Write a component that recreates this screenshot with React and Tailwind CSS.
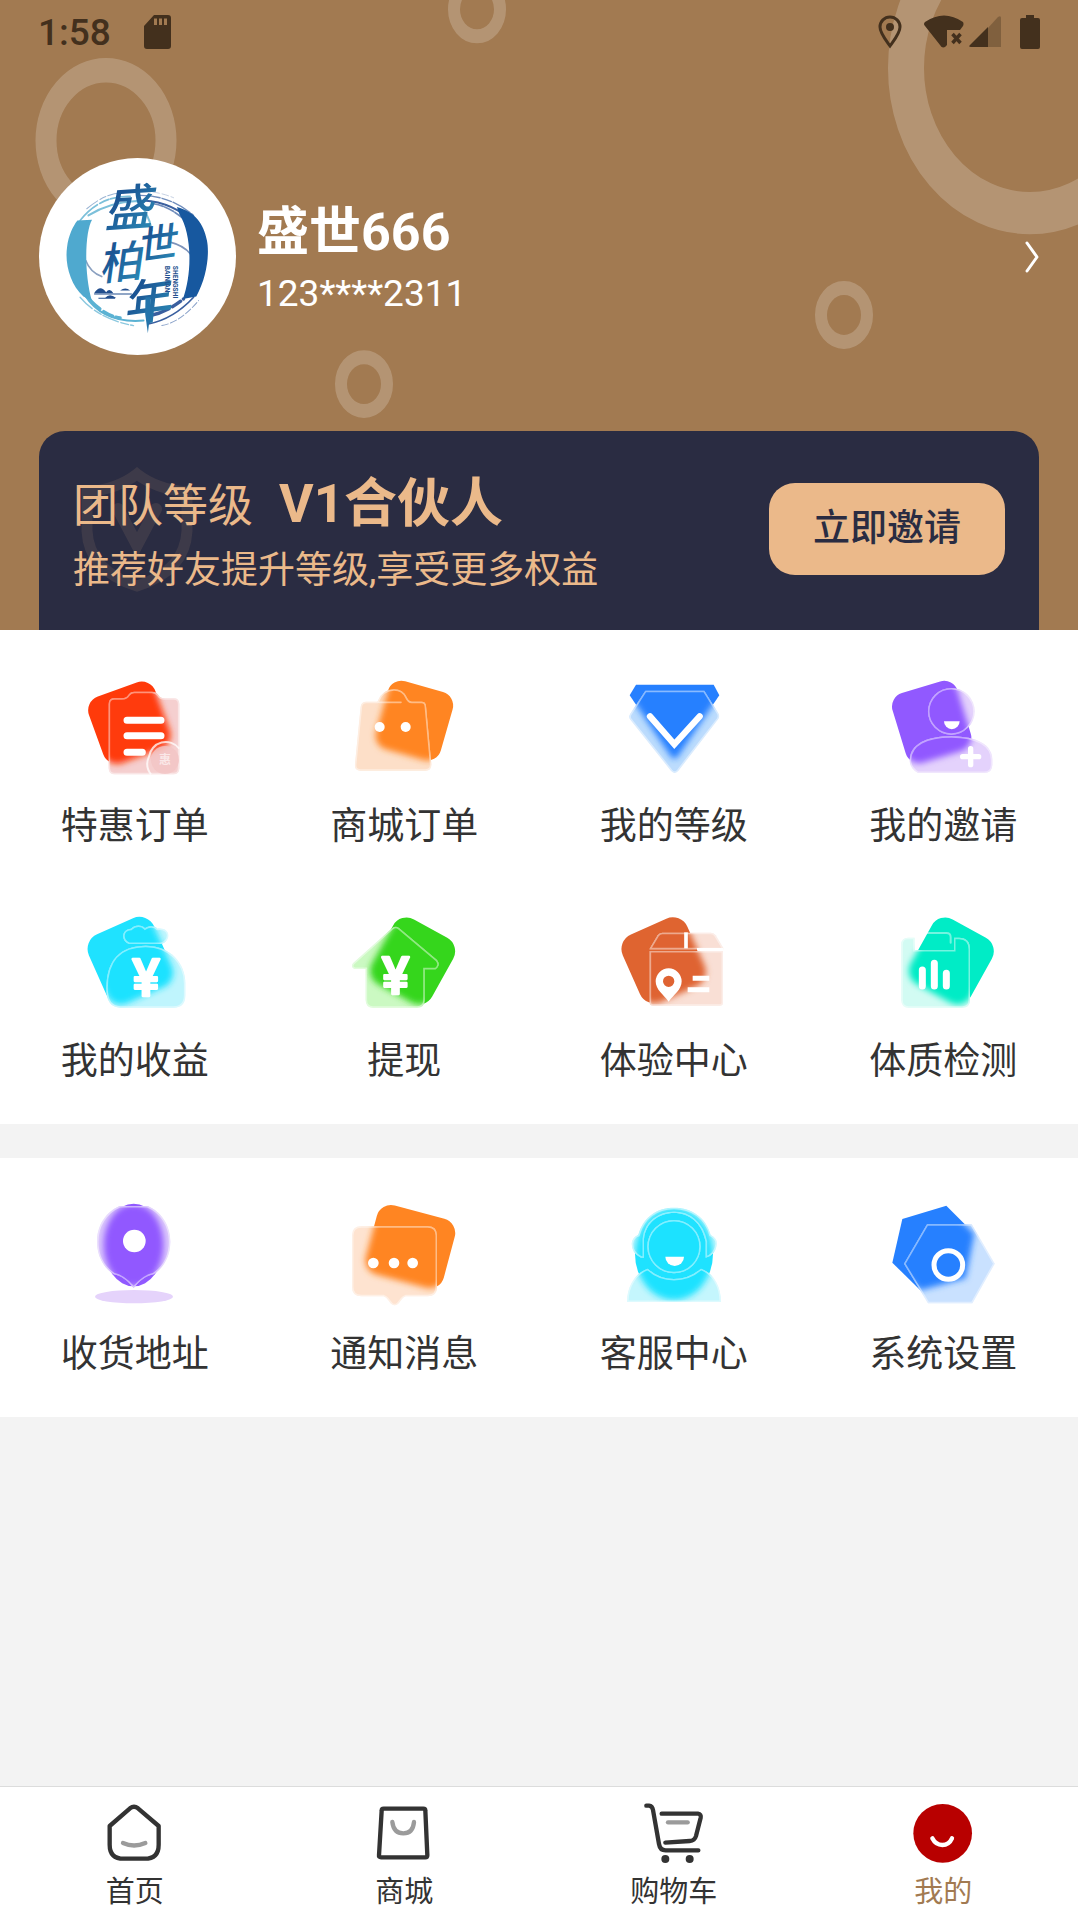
// Tinted glass card over a solid shape: the part under the glass is blurred.
function Frosted({ id, viewBox, color, tint, base, glass, lines, children }) {
    return (
        <svg viewBox={viewBox} className="w-[110px] h-[110px]" aria-hidden="true">
            <defs>
                <clipPath id={`${id}-clip`}>{glass}</clipPath>
                <filter id={`${id}-blur`} x="-20%" y="-20%" width="140%" height="140%">
                    <feGaussianBlur stdDeviation="10" />
                </filter>
            </defs>
            <g fill={color}>{base}</g>
            <g fill={tint}>{glass}</g>
            <g clipPath={`url(#${id}-clip)`}>
                <g fill={color} filter={`url(#${id}-blur)`}>
                    {base}
                </g>
                <g fill="none" stroke="#fff" strokeOpacity="0.45" strokeWidth="9">
                    {glass}
                </g>
            </g>
            {lines && (
                <g fill="none" stroke="#fff" strokeOpacity="0.45" strokeWidth="5" strokeLinecap="round">
                    {lines}
                </g>
            )}
            {children}
        </svg>
    );
}

function Tile({ cx, cy, w, h, r, angle }) {
    return (
        <rect
            x={cx - w / 2}
            y={cy - h / 2}
            width={w}
            height={h}
            rx={r}
            transform={`rotate(${angle} ${cx} ${cy})`}
        />
    );
}

function Yen({ x, y }) {
    return (
        <text
            x={x}
            y={y}
            textAnchor="middle"
            fontSize="156"
            fontWeight="500"
            fill="#fff"
            stroke="#fff"
            strokeWidth="7"
            strokeLinejoin="round"
        >
            ¥
        </text>
    );
}

const DealIcon = () => (
    <Frosted
        id="deal"
        viewBox="59 42 330 330"
        color="#ff3a0a"
        tint="#f5cfcf"
        base={<Tile cx={207} cy={188} w={212} h={212} r={44} angle={-20} />}
        glass={
            <path d="M145 132Q145 115 162 115H185Q198 115 204 105Q210 95 222 95H275Q288 95 294 105Q300 115 312 115H340Q357 115 357 132V325Q357 343 339 343H163Q145 343 145 325Z" />
        }
    >
        <path d="M200 181H302M200 227H302M200 277H246" stroke="#fff" strokeWidth="21" strokeLinecap="round" />
        <circle cx="314" cy="300" r="42" fill="#f3c4c4" fillOpacity="0.8" />
        <path d="M272 343A51 51 0 0 1 266 290A51 51 0 0 1 357 266" fill="none" stroke="#fff" strokeOpacity="0.75" strokeWidth="6" />
        <text x="314" y="312" textAnchor="middle" fontSize="36" fontWeight="700" fill="#fff" fillOpacity="0.6">
            惠
        </text>
    </Frosted>
);

const MallOrderIcon = () => (
    <Frosted
        id="mall-order"
        viewBox="868 42 330 330"
        color="#ff8522"
        tint="#fddfc8"
        base={<Tile cx={1064} cy={182} w={202} h={212} r={42} angle={16} />}
        glass={
            <path d="M920 125H953Q968 88 1003 88Q1030 88 1041 112Q1047 125 1056 125H1086Q1098 125 1099 138L1115 312Q1116 332 1098 332H902Q884 332 886 312L903 140Q905 125 920 125Z" />
        }
        lines={<path d="M958 127H1024" />}
    >
        <circle cx="960" cy="201" r="15" fill="#fff" />
        <circle cx="1038" cy="201" r="15" fill="#fff" />
    </Frosted>
);

const LevelIcon = () => (
    <Frosted
        id="level"
        viewBox="56 42 330 330"
        color="#2680ff"
        tint="#bcdcfd"
        base={<path d="M107 74H340L357 106L232 290Q222 302 212 290L88 106Z" />}
        glass={
            <path d="M135 92H312L353 158Q360 168 353 178L234 332Q223 344 212 332L91 180Q83 170 91 160Z" />
        }
    >
        <path d="M149 169L222 253L298 169" fill="none" stroke="#fff" strokeWidth="19" strokeLinecap="round" />
    </Frosted>
);

const InviteIcon = () => (
    <Frosted
        id="invite"
        viewBox="865 42 330 330"
        color="#9159ff"
        tint="#e4d2fc"
        base={<Tile cx={996} cy={186} w={204} h={218} r={42} angle={-17} />}
        glass={
            <>
                <circle cx="1055" cy="154" r="70" />
                <path d="M955 339Q930 325 930 300C932 252 980 229 1055 229C1132 229 1178 255 1178 300V314Q1178 339 1152 339Z" />
            </>
        }
    >
        <path d="M1033 184H1080A23.500 23.500 0 0 1 1033 184Z" fill="#fff" />
        <path d="M1113 266V314M1089 290H1137" stroke="#fff" strokeWidth="16" strokeLinecap="round" />
    </Frosted>
);

const IncomeIcon = () => (
    <Frosted
        id="income"
        viewBox="59 27 330 330"
        color="#1fe2ff"
        tint="#bff5fd"
        base={<Tile cx={210} cy={182} w={214} h={226} r={48} angle={-24} />}
        glass={
            <>
                <path d="M206 132C182 122 182 88 212 86C224 74 244 74 254 85C266 76 284 78 291 86C334 80 332 126 302 132Z" />
                <path d="M138 265C138 180 180 137 256 137C330 137 375 190 375 250V285Q375 323 340 323H180Q138 323 138 265Z" />
            </>
        }
    >
        <Yen x={257} y={287} />
    </Frosted>
);

const WithdrawIcon = () => (
    <Frosted
        id="withdraw"
        viewBox="868 27 330 330"
        color="#35d61c"
        tint="#cbf9c2"
        base={<Tile cx={1059} cy={183} w={206} h={222} r={46} angle={29} />}
        glass={
            <path d="M998 84Q1008 76 1018 84L1132 180Q1144 196 1128 208H1095V300Q1095 323 1072 323H940Q918 323 918 300V207H885Q872 202 880 190Z" />
        }
    >
        <Yen x={1008} y={283} />
    </Frosted>
);

const CenterIcon = () => (
    <Frosted
        id="center"
        viewBox="56 27 330 330"
        color="#df6430"
        tint="#f9dfd5"
        base={<Tile cx={190} cy={181} w={212} h={222} r={48} angle={-24} />}
        glass={
            <>
                <path d="M147 148L172 106Q177 98 186 98H332Q341 98 346 106L371 148Z" />
                <path d="M148 153H368V308Q368 317 358 317H158Q148 317 148 308Z" />
            </>
        }
    >
        <path d="M257 97V145" stroke="#fff" strokeWidth="11" />
        <path d="M290 148H370" stroke="#fff" strokeWidth="8" />
        <path
            fillRule="evenodd"
            d="M205 305C190 284 166 270 166 244A39 39 0 0 1 244 244C244 270 220 284 205 305ZM205 227A17 17 0 1 0 205 261A17 17 0 1 0 205 227Z"
            fill="#fff"
        />
        <path d="M277 235H327M262 269H327" stroke="#fff" strokeWidth="15" />
    </Frosted>
);

const CheckupIcon = () => (
    <Frosted
        id="checkup"
        viewBox="865 27 330 330"
        color="#00ecc6"
        tint="#d2fbf3"
        base={<Tile cx={1055} cy={183} w={206} h={222} r={46} angle={29} />}
        glass={
            <path d="M905 133Q905 113 925 113H945V150H1063V113H1078Q1111 113 1111 148V300Q1111 323 1088 323H927Q905 323 905 300Z" />
        }
        lines={<path d="M952 142V112Q952 99 965 99H1040Q1053 99 1053 112V128" strokeWidth="6" />}
    >
        <path d="M968 210V258M1004 190V258M1040 220V258" stroke="#fff" strokeWidth="21" strokeLinecap="round" />
    </Frosted>
);

const AddressIcon = () => (
    <Frosted
        id="address"
        viewBox="59 39 330 330"
        color="#9159ff"
        tint="#dcc9fc"
        base={<ellipse cx="220" cy="168" rx="90" ry="124" />}
        glass={
            <path d="M178 51H262C303 68 330 110 330 158C330 206 306 238 280 256C256 260 238 276 220 297C202 276 184 260 160 256C134 238 110 206 110 158C110 110 137 68 178 51Z" />
        }
    >
        <circle cx="222" cy="156" r="34" fill="#fff" />
        <ellipse cx="221" cy="323" rx="117" ry="20" fill="#e5d3fb" />
    </Frosted>
);

const MessageIcon = () => (
    <Frosted
        id="message"
        viewBox="868 39 330 330"
        color="#ff8522"
        tint="#fee3d0"
        base={<Tile cx={1052} cy={173} w={242} h={214} r={44} angle={15} />}
        glass={
            <path d="M905 112H1104Q1132 112 1132 140V294Q1132 322 1104 322H1038Q1030 324 1022 336Q1005 362 988 336Q980 324 972 322H905Q877 322 877 294V140Q877 112 905 112Z" />
        }
    >
        <circle cx="941" cy="222" r="16" fill="#fff" />
        <circle cx="1003" cy="222" r="16" fill="#fff" />
        <circle cx="1059" cy="222" r="16" fill="#fff" />
    </Frosted>
);

const ServiceIcon = () => (
    <Frosted
        id="service"
        viewBox="56 39 330 330"
        color="#1fe2ff"
        tint="#c4f6fd"
        base={<ellipse cx="221" cy="195" rx="117" ry="138" />}
        glass={
            <>
                <path d="M131 206H122Q94 192 94 164Q96 144 114 138C128 86 168 56 221 56C274 56 318 86 331 138Q350 148 350 164Q346 198 316 206V158C304 100 266 72 221 72C176 72 136 100 131 150Z" />
                <circle cx="221" cy="173" r="80" />
                <path d="M80 339C80 290 106 252 142 239Q176 270 221 270Q266 270 302 239C338 252 362 290 362 339Z" />
            </>
        }
    >
        <path d="M195 203H251A28 28 0 0 1 195 203Z" fill="#fff" />
    </Frosted>
);

const SettingIcon = () => (
    <Frosted
        id="setting"
        viewBox="865 39 330 330"
        color="#2680ff"
        tint="#c9e1ff"
        base={<path d="M1040 50L1124 134L1098 268L962 304L878 221L908 90Z" />}
        glass={<path d="M982 106H1116L1185 224L1118 343H985L913 224Z" />}
    >
        <circle cx="1046" cy="228" r="43" fill="none" stroke="#fff" strokeWidth="15" />
    </Frosted>
);

const orderMenu = [
    { label: "特惠订单", Icon: DealIcon },
    { label: "商城订单", Icon: MallOrderIcon },
    { label: "我的等级", Icon: LevelIcon },
    { label: "我的邀请", Icon: InviteIcon },
    { label: "我的收益", Icon: IncomeIcon },
    { label: "提现", Icon: WithdrawIcon },
    { label: "体验中心", Icon: CenterIcon },
    { label: "体质检测", Icon: CheckupIcon },
];

const serviceMenu = [
    { label: "收货地址", Icon: AddressIcon },
    { label: "通知消息", Icon: MessageIcon },
    { label: "客服中心", Icon: ServiceIcon },
    { label: "系统设置", Icon: SettingIcon },
];

function Menu({ items }) {
    return (
        <section className="grid grid-cols-4 gap-y-[55px] bg-white pt-11 pb-[35px]">
            {items.map(({ label, Icon }) => (
                <a key={label} href="#" className="flex flex-col items-center gap-4">
                    <Icon />
                    <span className="text-[37px] leading-[54px] text-[#333]">{label}</span>
                </a>
            ))}
        </section>
    );
}

const tabs = [
    {
        label: "首页",
        viewBox: "128 60 192 192",
        icon: (
            <>
                <path d="M148 138L209 85Q221 76 233 85L295 138V194Q295 236 253 236H190Q148 236 148 194Z" stroke="#333" />
                <path d="M188 189Q221 204 255 189" stroke="#9b9b9b" />
            </>
        ),
    },
    {
        label: "商城",
        viewBox: "937 60 192 192",
        icon: (
            <>
                <path d="M972 86H1091Q1097 86 1097 92L1103 226Q1103 232 1097 232H964Q957 232 958 226L966 92Q966 86 972 86Z" stroke="#333" />
                <path d="M998 126Q1002 160 1031 160Q1060 160 1063 126" stroke="#9b9b9b" />
            </>
        ),
    },
    {
        label: "购物车",
        viewBox: "125 60 192 192",
        icon: (
            <>
                <path d="M138 77H146Q156 78 158 90L176 192Q179 211 196 211H294M184 101H293Q303 102 301 113L287 168Q283 182 268 183L195 188" stroke="#333" />
                <path d="M203 127H262" stroke="#9b9b9b" />
                <circle cx="195" cy="237" r="12" fill="#333" />
                <circle cx="268" cy="237" r="12" fill="#333" />
            </>
        ),
    },
    {
        label: "我的",
        viewBox: "934 60 192 192",
        active: true,
        icon: (
            <>
                <circle cx="1029" cy="160" r="88" fill="#b80000" />
                <path d="M998 175Q1008 195 1028 195Q1048 195 1057 175" stroke="#fff" />
            </>
        ),
    },
];

function TabBar() {
    return (
        <nav className="grid grid-cols-4 border-t border-[#dcdcdc] bg-white pt-[13px] pb-2">
            {tabs.map((tab) => (
                <a
                    key={tab.label}
                    href="#"
                    aria-current={tab.active ? "page" : undefined}
                    className="flex flex-col items-center gap-[10px]"
                >
                    <svg
                        viewBox={tab.viewBox}
                        className="w-16 h-16"
                        fill="none"
                        strokeWidth="13"
                        strokeLinecap="round"
                        strokeLinejoin="round"
                        aria-hidden="true"
                    >
                        {tab.icon}
                    </svg>
                    <span className={`text-[29px] leading-9 ${tab.active ? "text-[#a27a51]" : "text-[#333]"}`}>
                        {tab.label}
                    </span>
                </a>
            ))}
        </nav>
    );
}

function StatusBar() {
    return (
        <div className="flex h-16 items-center justify-between px-[38px] text-[#43301d]">
            <div className="flex items-center gap-[33px]">
                <span className="pt-[2px] text-[37px] leading-10 font-medium">1:58</span>
                <svg viewBox="0 0 27 34" className="w-[27px] h-[34px]" fill="currentColor" aria-hidden="true">
                    <path
                        fillRule="evenodd"
                        d="M10 0H24Q27 0 27 3V31Q27 34 24 34H3Q0 34 0 31V11ZM10 3.500V10H13V3.500ZM15 3.500V10H18V3.500ZM20 3.500V10H23V3.500Z"
                    />
                </svg>
            </div>
            <div className="flex items-center">
                <svg viewBox="0 0 24 34" className="w-6 h-[34px]" fill="none" aria-hidden="true">
                    <path
                        d="M12 31C7 24 2 18 2 12A10 10 0 0 1 22 12C22 18 17 24 12 31Z"
                        stroke="currentColor"
                        strokeWidth="3"
                    />
                    <circle cx="12" cy="12" r="4" fill="currentColor" />
                </svg>
                <svg viewBox="0 0 40 34" className="ml-[22px] w-10 h-[34px]" aria-hidden="true">
                    <path
                        d="M1 7Q20 -6 39 7Q40 9 39 11L36 15H23V30Q19 35 16 30L1 11Q-1 9 1 7Z"
                        fill="currentColor"
                    />
                    <path d="M28.500 19L36.500 28M36.500 19L28.500 28" stroke="currentColor" strokeWidth="3.400" />
                </svg>
                <svg viewBox="0 0 32 34" className="ml-[5px] w-8 h-[34px]" fill="currentColor" aria-hidden="true">
                    <path d="M29 2Q32 0 32 3V32H19V13Z" fillOpacity="0.35" />
                    <path d="M19 12V32H2Q-1 32 1 30Z" />
                </svg>
                <svg viewBox="0 0 20 34" className="ml-[19px] w-5 h-[34px]" fill="currentColor" aria-hidden="true">
                    <path d="M6 0H14V3H18Q20 3 20 5V32Q20 34 18 34H2Q0 34 0 32V5Q0 3 2 3H6Z" />
                </svg>
            </div>
        </div>
    );
}

// Brush ring with the four brand characters
function Avatar() {
    return (
        <svg viewBox="57 53 590 590" className="w-[197px] h-[197px] rounded-full bg-white" role="img" aria-label="盛世柏年">
            <defs>
                <linearGradient id="ink" x1="0" y1="0" x2="1" y2="1">
                    <stop offset="0.3" stopColor="#1b5594" />
                    <stop offset="1" stopColor="#2f97be" />
                </linearGradient>
            </defs>
            <g fill="none" strokeLinecap="round">
                <path d="M180 240Q240 165 330 168" stroke="#7cc0da" strokeWidth="5" strokeDasharray="70 8 30 5" />
                <path d="M205 225Q270 185 350 182Q385 215 395 270" stroke="#7cc0da" strokeWidth="6" />
                <path d="M200 205Q260 155 310 158" stroke="#9bb5d4" strokeWidth="3" strokeDasharray="40 8 20 6" />
                <path d="M370 180Q460 185 525 250" stroke="#3a5f9f" strokeWidth="6" />
                <path d="M400 190Q460 200 515 260" stroke="#6f8cbb" strokeWidth="5" strokeDasharray="30 5" />
                <path d="M360 165Q450 165 520 225" stroke="#6f8cbb" strokeWidth="4" strokeDasharray="60 6 30 5" />
                <path d="M370 152Q420 155 460 172" stroke="#a9b9d4" strokeWidth="2" strokeDasharray="20 8" />
                <path d="M450 305Q490 315 510 340" stroke="#7e94bb" strokeWidth="5" />
                <path d="M197 360Q210 395 245 408" stroke="#8aa0c0" strokeWidth="5" />
                <path d="M195 465Q250 550 370 540" stroke="#5bb2d3" strokeWidth="6" />
                <path d="M190 455Q245 525 300 532" stroke="#5bb2d3" strokeWidth="10" strokeDasharray="70 14 30 10" />
                <path d="M180 470Q235 535 340 555" stroke="#8cc8df" strokeWidth="4" strokeDasharray="50 8 24 6" />
                <path d="M385 550Q460 535 520 470" stroke="#3a5f9f" strokeWidth="5" />
                <path d="M390 525Q440 515 490 475" stroke="#3a5f9f" strokeWidth="10" strokeDasharray="60 12 30 10" />
                <path d="M425 555Q480 545 535 480" stroke="#8ba3ca" strokeWidth="3" strokeDasharray="20 7" />
            </g>
            <path d="M216 238C196 270 190 390 215 480L190 468C150 430 134 370 141 320C145 285 160 255 172 240Z" fill="#4fa9cf" />
            <path d="M478 222C515 280 516 400 488 475L528 468C560 410 568 340 560 300C550 250 525 215 470 200Z" fill="#17589f" />
            <path d="M222 460H335M235 473H285" stroke="#234f8e" strokeWidth="3" />
            <path d="M222 458Q240 430 258 455Q268 440 280 458ZM255 472Q268 456 288 472ZM300 450Q316 438 330 450Z" fill="#234f8e" />
            <g fill="url(#ink)" fontWeight="500" fontStyle="italic">
                <text x="250" y="256" fontSize="146" transform="rotate(-4 320 210)">
                    盛
                </text>
                <text x="348" y="352" fontSize="118" transform="rotate(-8 410 310)">
                    世
                </text>
                <text x="234" y="413" fontSize="130" transform="rotate(-6 300 370)">
                    柏
                </text>
                <text x="306" y="536" fontSize="144" transform="rotate(-8 380 490)">
                    年
                </text>
            </g>
            <path d="M376 470L392 470L390 520L383 578L375 520Z" fill="#2474ab" />
            <g fill="#234f8e" fontSize="20" fontWeight="700">
                <text transform="translate(457 376) rotate(90)">SHENGSHI</text>
                <text transform="translate(433 376) rotate(90)">BAINIAN</text>
            </g>
        </svg>
    );
}

function Profile() {
    return (
        <div className="mt-[94px] flex items-center px-[39px]">
            <Avatar />
            <div className="ml-[21px] flex-1 pt-[3px] text-white">
                <h1 className="text-[52px] leading-[68px] font-bold">盛世666</h1>
                <p className="mt-[3px] text-[37px] leading-[48px]">123****2311</p>
            </div>
            <button type="button" aria-label="个人资料">
                <svg viewBox="0 0 14 32" className="w-[14px] h-8" fill="none" aria-hidden="true">
                    <path d="M2 2L12 16L2 30" stroke="#fff" strokeWidth="3" strokeLinecap="round" strokeLinejoin="round" />
                </svg>
            </button>
        </div>
    );
}

function TeamCard() {
    return (
        <section className="relative mx-[39px] mt-[76px] flex items-start justify-between rounded-t-[26px] bg-[#2a2c42] px-[34px] pt-[41px] pb-8">
            <svg
                viewBox="0 0 112 126"
                className="absolute left-[42px] top-9 w-28"
                fill="none"
                stroke="#ebb98a"
                strokeOpacity="0.1"
                aria-hidden="true"
            >
                <path d="M56 7Q75 22 106 25V64Q104 104 56 119Q8 104 6 64V25Q37 22 56 7Z" strokeWidth="11" />
                <path d="M37 42L56 78L75 42" strokeWidth="12" strokeLinecap="round" />
            </svg>
            <div className="relative text-[#ebb98a]">
                <h2 className="flex items-baseline gap-[26px]">
                    <span className="text-[45px] leading-[56px]">团队等级</span>
                    <strong className="text-[53px] leading-[64px] font-bold">V1合伙人</strong>
                </h2>
                <p className="mt-2 text-[37px] leading-[54px]">推荐好友提升等级,享受更多权益</p>
            </div>
            <button
                type="button"
                className="mt-[11px] rounded-[26px] bg-[#ebb98a] px-11 py-[18px] text-[37px] leading-[56px] font-medium text-[#2a2c42]"
            >
                立即邀请
            </button>
        </section>
    );
}

export default function App() {
    return (
        <div className="flex min-h-screen flex-col bg-[#f3f3f3] font-['Roboto','Noto_Sans_CJK_SC',sans-serif]">
            <header className="relative overflow-hidden bg-[#a27a51]">
                <svg
                    viewBox="0 0 1078 538"
                    preserveAspectRatio="none"
                    className="absolute inset-0 h-full w-full"
                    fill="none"
                    stroke="#fff"
                    strokeOpacity="0.2"
                    aria-hidden="true"
                >
                    <circle cx="106" cy="120" r="60" strokeWidth="21" />
                    <circle cx="477" cy="8" r="23" strokeWidth="12" />
                    <circle cx="364" cy="328" r="23" strokeWidth="12" />
                    <circle cx="844" cy="269" r="23" strokeWidth="12" />
                    <circle cx="1030" cy="58" r="124" strokeWidth="36" />
                </svg>
                <div className="relative">
                    <StatusBar />
                    <Profile />
                    <TeamCard />
                </div>
            </header>
            <main className="flex flex-1 flex-col gap-[34px]">
                <Menu items={orderMenu} />
                <Menu items={serviceMenu} />
            </main>
            <TabBar />
        </div>
    );
}
